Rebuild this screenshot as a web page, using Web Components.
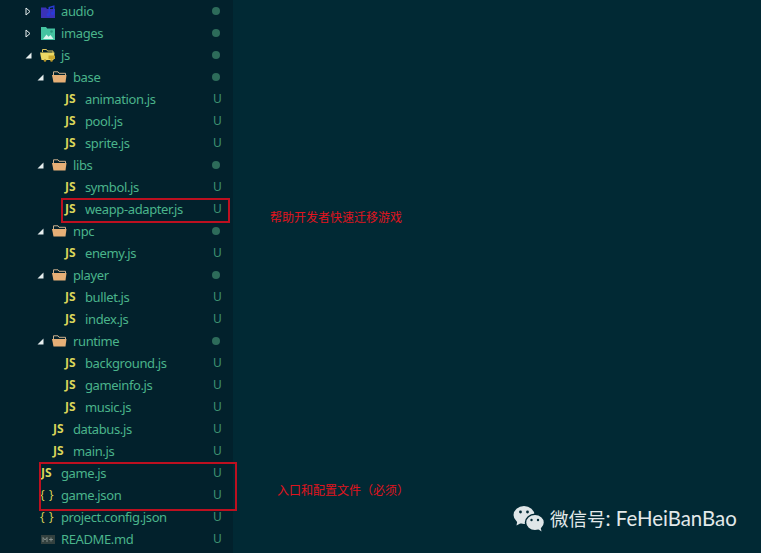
<!DOCTYPE html>
<html lang="zh">
<head>
<meta charset="utf-8">
<title>FeHeiBanBao</title>
<style>
  html, body { margin: 0; height: 100%; background: #012934; overflow: hidden; }
</style>
</head>
<body>
<explorer-view>
  <tree-row depth="0" icon="audio" arrow="closed" name="audio" status="dot"></tree-row>
  <tree-row depth="0" icon="images" arrow="closed" name="images" status="dot"></tree-row>
  <tree-row depth="0" icon="js-folder" arrow="open" name="js" status="dot"></tree-row>
  <tree-row depth="1" icon="folder" arrow="open" name="base" status="dot"></tree-row>
  <tree-row depth="2" icon="js" name="animation.js" status="U"></tree-row>
  <tree-row depth="2" icon="js" name="pool.js" status="U"></tree-row>
  <tree-row depth="2" icon="js" name="sprite.js" status="U"></tree-row>
  <tree-row depth="1" icon="folder" arrow="open" name="libs" status="dot"></tree-row>
  <tree-row depth="2" icon="js" name="symbol.js" status="U"></tree-row>
  <tree-row depth="2" icon="js" name="weapp-adapter.js" status="U"></tree-row>
  <tree-row depth="1" icon="folder" arrow="open" name="npc" status="dot"></tree-row>
  <tree-row depth="2" icon="js" name="enemy.js" status="U"></tree-row>
  <tree-row depth="1" icon="folder" arrow="open" name="player" status="dot"></tree-row>
  <tree-row depth="2" icon="js" name="bullet.js" status="U"></tree-row>
  <tree-row depth="2" icon="js" name="index.js" status="U"></tree-row>
  <tree-row depth="1" icon="folder" arrow="open" name="runtime" status="dot"></tree-row>
  <tree-row depth="2" icon="js" name="background.js" status="U"></tree-row>
  <tree-row depth="2" icon="js" name="gameinfo.js" status="U"></tree-row>
  <tree-row depth="2" icon="js" name="music.js" status="U"></tree-row>
  <tree-row depth="1" icon="js" name="databus.js" status="U"></tree-row>
  <tree-row depth="1" icon="js" name="main.js" status="U"></tree-row>
  <tree-row depth="0" icon="js" name="game.js" status="U"></tree-row>
  <tree-row depth="0" icon="json" name="game.json" status="U"></tree-row>
  <tree-row depth="0" icon="json" name="project.config.json" status="U"></tree-row>
  <tree-row depth="0" icon="md" name="README.md" status="U"></tree-row>

  <red-box slot="over" style="left:61px;top:198px;width:169px;height:25px"></red-box>
  <red-box slot="over" style="left:39px;top:462px;width:198px;height:49px"></red-box>
  <red-note slot="over" style="left:270px;top:209px">帮助开发者快速迁移游戏</red-note>
  <red-note slot="over" style="left:277px;top:482px">入口和配置文件（必须）</red-note>
  <wechat-mark slot="over" style="left:513px;top:504px"><span style="font-size:18.500px">微信号</span>: FeHeiBanBao</wechat-mark>
</explorer-view>

<script>
const ICONS = {
  audio: `<svg width="14" height="13" viewBox="0 0 14 13"><path d="M0 2.500h5l1 1.500h8v9H0z" fill="#3a32b8"/><path d="M7.500 2l6-1.700v8a1.800 1.600 0 1 1-1.400-1.500V2.200L9 3v6.800a1.800 1.600 0 1 1-1.500-1.500z" fill="#2a3bd6"/></svg>`,
  images: `<svg width="14" height="14" viewBox="0 0 14 14"><path d="M0 1h5l1.200 1.500H14V14H0z" fill="#45c4a1"/><path d="M2 13l3.500-4.500 2 2.200 2-1.700 3 4z" fill="#dcf7ef"/><circle cx="10.500" cy="5.500" r="1.300" fill="#2a9a7d"/></svg>`,
  'js-folder': `<svg width="15" height="14" viewBox="0 0 15 14" style="margin-left:-1px"><path d="M2.500 4V1.500h4L7.500 3H13v2" fill="none" stroke="#d8c25f" stroke-width="1"/><path d="M0 4.500h14.500L13.500 12H1.500z" fill="#ecd964"/><path d="M8.500 7.500H15V11H8.500z" fill="#c9a92f"/><circle cx="5" cy="12.500" r="1.300" fill="#b8972a"/><circle cx="11.500" cy="12.500" r="1.300" fill="#b8972a"/></svg>`,
  folder: `<svg width="15" height="12" viewBox="0 0 15 12" style="margin-left:-1px"><path d="M1.500 4V.8h4.500l1 1.500h6.500V4" fill="none" stroke="#cbb08e" stroke-width="1"/><path d="M0 4h14.500L13.500 11.500H1.500z" fill="#e6af76"/></svg>`,
  js: `<span class="js">JS</span>`,
  json: `<span class="json">{ }</span>`,
  md: `<svg width="14" height="9" viewBox="0 0 14 9"><rect width="14" height="9" fill="#33413f"/><path d="M2 7V2.500L4 5l2-2.500V7" fill="none" stroke="#8a9592" stroke-width=".9"/><path d="M8 4.500h4M10 2.500v4" fill="none" stroke="#8a9592" stroke-width=".9"/></svg>`
};

const rowTemplate = document.createElement('template');
rowTemplate.innerHTML = `
  <style>
    :host {
      display: flex;
      align-items: center;
      height: 22px;
      padding-right: 12px;
      font: 13px/22px "Noto Sans", "Open Sans", sans-serif;
      color: #4ab48b;
    }
    .arrow { width: 12px; flex: none; display: flex; justify-content: center; }
    .icon {
      width: 14px;
      flex: none;
      display: flex;
      align-items: center;
      margin: 0 6px 0 7px;
    }
    .icon svg { flex: none; }
    .name { flex: 1; white-space: nowrap; letter-spacing: -0.38px; }
    .status {
      width: 8px;
      text-align: center;
      flex: none;
      font-size: 12px;
      color: #3f9473;
    }
    .dot {
      display: block;
      width: 8px;
      height: 8px;
      margin: -1px 0 0 -1px;
      border-radius: 50%;
      background: #2d6b5a;
    }
    .js { font: bold 12px/1 "Noto Sans", sans-serif; color: #dad45a; }
    .json { font: 12px/1 "Noto Sans", sans-serif; color: #d6cf55; white-space: pre; letter-spacing: .6px; margin-left: -1px; }
  </style>
  <span class="arrow"></span>
  <span class="icon"></span>
  <span class="name"></span>
  <span class="status"></span>
`;

class TreeRow extends HTMLElement {
  constructor() {
    super();
    this.attachShadow({ mode: 'open' });
    this.shadowRoot.appendChild(rowTemplate.content.cloneNode(true));
  }

  connectedCallback() {
    const depth = Number(this.getAttribute('depth') || 0);
    const arrow = this.getAttribute('arrow');
    const root = this.shadowRoot;

    this.style.paddingLeft = (22 + depth * 12) + 'px';
    root.querySelector('.name').textContent = this.getAttribute('name');
    root.querySelector('.icon').innerHTML = ICONS[this.getAttribute('icon')];

    if (arrow === 'closed') {
      root.querySelector('.arrow').innerHTML = '<svg width="6" height="9" viewBox="0 0 6 9"><path d="M1 1l4 3.500L1 8z" fill="none" stroke="#e6eeee" stroke-width="1"/></svg>';
    } else if (arrow === 'open') {
      root.querySelector('.arrow').innerHTML = '<svg width="7" height="7" viewBox="0 0 7 7"><path d="M6.500 .5v6H.5z" fill="#e6eeee"/></svg>';
    }

    const status = this.getAttribute('status');
    const slot = root.querySelector('.status');
    if (status === 'dot') {
      slot.innerHTML = '<span class="dot"></span>';
    } else {
      slot.textContent = status;
    }
  }
}
customElements.define('tree-row', TreeRow);

class ExplorerView extends HTMLElement {
  constructor() {
    super();
    this.attachShadow({ mode: 'open' });
    this.shadowRoot.innerHTML = `
      <style>
        :host { display: flex; position: relative; width: 761px; height: 553px; overflow: hidden; background: #012934; }
        .side { width: 233px; flex: none; background: #02212c; }
      </style>
      <div class="side"><slot></slot></div>
      <slot name="over"></slot>
    `;
  }
}
customElements.define('explorer-view', ExplorerView);

class RedBox extends HTMLElement {
  constructor() {
    super();
    this.attachShadow({ mode: 'open' });
    this.shadowRoot.innerHTML = `
      <style>
        :host { display: block; position: absolute; box-sizing: border-box; border: 2px solid #bd1020; }
      </style>
    `;
  }
}
customElements.define('red-box', RedBox);

class RedNote extends HTMLElement {
  constructor() {
    super();
    this.attachShadow({ mode: 'open' });
    this.shadowRoot.innerHTML = `
      <style>
        :host {
          display: block;
          position: absolute;
          white-space: nowrap;
          color: #e0141e;
          font: 12px/16px "Noto Sans CJK SC", sans-serif;
        }
      </style>
      <slot></slot>
    `;
  }
}
customElements.define('red-note', RedNote);

class WechatMark extends HTMLElement {
  constructor() {
    super();
    this.attachShadow({ mode: 'open' });
    this.shadowRoot.innerHTML = `
      <style>
        :host {
          display: flex;
          align-items: center;
          gap: 6px;
          position: absolute;
          white-space: nowrap;
          color: #e3e9ea;
          font: 20.400px/28px Lato, "Noto Sans CJK SC", sans-serif;
        }
        .label { white-space: pre; }
      </style>
      <svg width="31" height="28" viewBox="0 0 31 28">
        <ellipse cx="11" cy="10" rx="10.500" ry="9" fill="#dfe6e8"/>
        <path d="M4.500 15l-1 5.500 5.500-3z" fill="#dfe6e8"/>
        <ellipse cx="22" cy="17.500" rx="9.500" ry="8.200" fill="#dfe6e8" stroke="#012934" stroke-width="1.500"/>
        <path d="M25 24l3.500 2.500-1-4.500z" fill="#dfe6e8"/>
        <circle cx="7.500" cy="7" r="1.400" fill="#012934"/><circle cx="14.500" cy="7" r="1.400" fill="#012934"/>
        <circle cx="18.500" cy="15" r="1.200" fill="#012934"/><circle cx="25" cy="15" r="1.200" fill="#012934"/>
      </svg>
      <span class="label"><slot></slot></span>
    `;
  }
}
customElements.define('wechat-mark', WechatMark);
</script>
</body>
</html>
